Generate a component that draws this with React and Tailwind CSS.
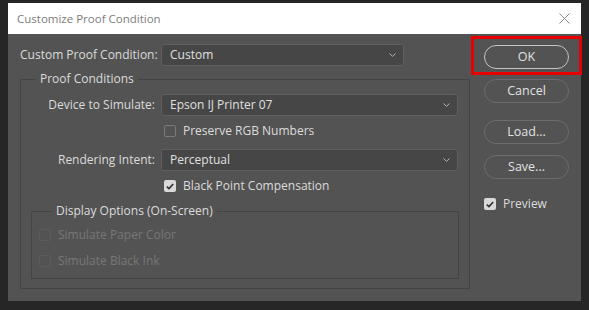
const FONT = { fontFamily: '"Open Sans", "Noto Sans", sans-serif' }

function Chevron() {
  return (
    <svg width="7" height="4" viewBox="0 0 7 4" className="shrink-0">
      <path d="M0.5 0.5 L3.5 3.3 L6.5 0.5" fill="none" stroke="#b5b5b5" strokeWidth="1" />
    </svg>
  )
}

function Select({ value, width }) {
  return (
    <div
      className="h-[22px] shrink-0 flex items-center justify-between pl-[8px] pr-[7px] rounded-[3px] border border-[#5f5f5f] bg-[#464646] text-[12px] text-[#e0e0e0]"
      style={{ width }}
    >
      <span className="whitespace-nowrap">{value}</span>
      <Chevron />
    </div>
  )
}

function Check({ checked, disabled, label }) {
  return (
    <div className="flex items-center gap-[7px] h-[12px]">
      {checked ? (
        <span className="w-[12px] h-[12px] rounded-[2px] bg-[#d9d9d9] flex items-center justify-center">
          <svg width="8" height="7" viewBox="0 0 8 7">
            <path d="M0.8 3.6 L3 5.6 L7.2 1" fill="none" stroke="#2f2f2f" strokeWidth="1.6" />
          </svg>
        </span>
      ) : (
        <span
          className={`w-[12px] h-[12px] rounded-[2px] border ${disabled ? 'border-[#5c5c5c]' : 'border-[#7a7a7a]'}`}
        />
      )}
      <span className={`whitespace-nowrap text-[12px] leading-none ${disabled ? 'text-[#777777]' : 'text-[#dcdcdc]'}`}>{label}</span>
    </div>
  )
}

function Btn({ label, active }) {
  return (
    <div
      className={`h-[24px] w-[85px] rounded-full border flex items-center justify-center text-[12.5px] text-[#e2e2e2] ${
        active ? 'border-[#c4c4c4]' : 'border-[#6c6c6c]'
      }`}
    >
      {label}
    </div>
  )
}

export default function App() {
  return (
    <div className="w-[589px] h-[310px] bg-[#262626] pt-[3px] pl-[8px] overflow-hidden" style={FONT}>
      <div className="relative w-[573px] h-[298px] bg-[#535353] flex flex-col">
        {/* Title bar */}
        <div className="h-[31px] bg-white flex items-center justify-between pl-[9px] pr-[11px]">
          <span className="text-[11.5px] text-[#7c7c7c]">Customize Proof Condition</span>
          <svg width="11" height="11" viewBox="0 0 11 11">
            <path d="M0.5 0.5 L10.5 10.5 M10.5 0.5 L0.5 10.5" stroke="#8a8a8a" strokeWidth="1" />
          </svg>
        </div>

        {/* Body */}
        <div className="flex pt-[10px] pl-[12px] gap-[14px]">
          <div className="w-[450px] flex flex-col">
            <div className="flex items-center gap-[6px]">
              <span className="w-[135px] shrink-0 whitespace-nowrap text-[12px] text-[#dcdcdc]">Custom Proof Condition:</span>
              <Select value="Custom" width={243} />
            </div>

            <fieldset className="mt-[5px] border border-[#444444] pb-[9px] pr-[10px]">
              <legend className="ml-[15px] px-[4px] h-[16px] text-[12px] leading-[16px] text-[#dcdcdc]">
                Proof Conditions
              </legend>
              <div className="flex items-center gap-[6px] mt-[7px]">
                <span className="w-[134px] shrink-0 whitespace-nowrap text-right text-[12px] text-[#dcdcdc]">Device to Simulate:</span>
                <Select value="Epson IJ Printer 07" width={297} />
              </div>
              <div className="pl-[143px] mt-[9px]">
                <Check label="Preserve RGB Numbers" />
              </div>
              <div className="flex items-center gap-[6px] mt-[12px]">
                <span className="w-[134px] shrink-0 whitespace-nowrap text-right text-[12px] text-[#dcdcdc]">Rendering Intent:</span>
                <Select value="Perceptual" width={297} />
              </div>
              <div className="pl-[143px] mt-[9px]">
                <Check checked label="Black Point Compensation" />
              </div>

              <fieldset className="ml-[10px] mt-[11px] border border-[#444444] pl-[7px] pb-[11px]">
                <legend className="ml-[13px] px-[4px] h-[16px] text-[12px] leading-[16px] text-[#dcdcdc]">
                  Display Options (On-Screen)
                </legend>
                <div className="mt-[10px] flex flex-col gap-[14px]">
                  <Check disabled label="Simulate Paper Color" />
                  <Check disabled label="Simulate Black Ink" />
                </div>
              </fieldset>
            </fieldset>
          </div>

          <div className="w-[85px] flex flex-col pt-[1px]">
            <Btn label="OK" active />
            <div className="mt-[10px]"><Btn label="Cancel" /></div>
            <div className="mt-[17px]"><Btn label="Load..." /></div>
            <div className="mt-[11px]"><Btn label="Save..." /></div>
            <div className="mt-[19px]"><Check checked label="Preview" /></div>
          </div>
        </div>

        {/* highlight annotation */}
        <div className="absolute left-[463px] top-[33px] w-[111px] h-[39px] border-[3px] border-[#e60000]" />
      </div>
    </div>
  )
}
